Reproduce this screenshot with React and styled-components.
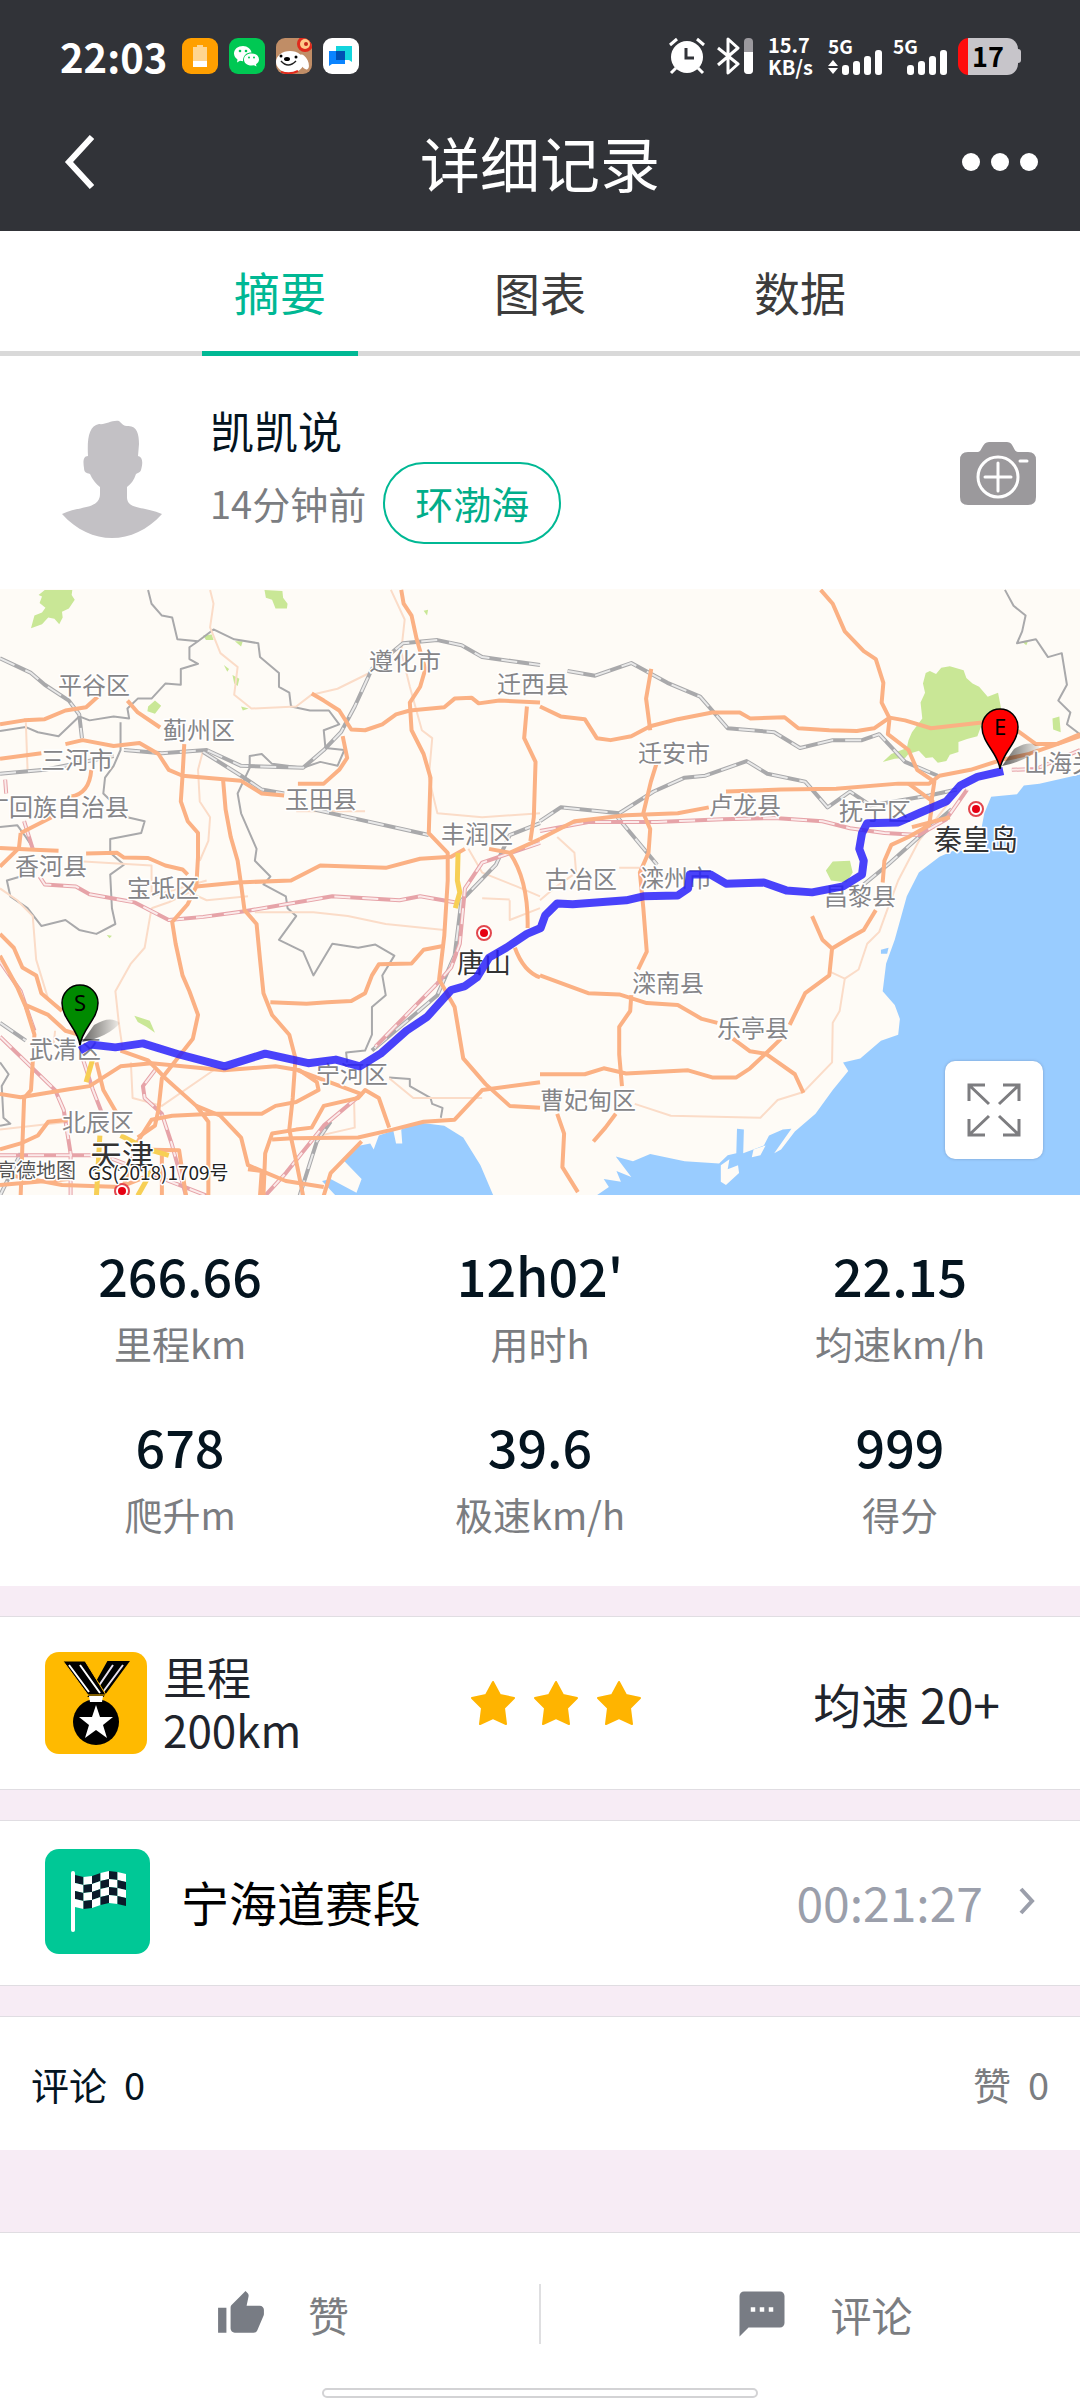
import React from 'react';
import styled, {createGlobalStyle} from 'styled-components';
import {MdSms, MdThumbUp} from 'react-icons/md';

const GlobalStyle = createGlobalStyle`
	* {
		box-sizing: border-box;
	}

	body {
		margin: 0;
		background: #f7ecf5;
		font-family: "Noto Sans CJK SC", "Noto Sans", sans-serif;
		color: #04141f;
	}

	button {
		padding: 0;
		border: 0;
		background: none;
		font: inherit;
		color: inherit;
		cursor: pointer;
	}

	a {
		color: inherit;
		text-decoration: none;
	}

	svg {
		display: block;
		flex: none;
	}
`;

const Page = styled.div`
	display: flex;
	flex-direction: column;
	min-height: 100vh;
`;

const Header = styled.header`
	background: #313338;
	color: #fff;
	padding: 23px 32px 8px 60px;
`;

const StatusBar = styled.div`
	display: flex;
	align-items: center;
	justify-content: space-between;
	height: 66px;
	padding-right: 27px;
`;

const StatusGroup = styled.div`
	display: flex;
	align-items: center;
	gap: ${props => props.$gap}px;
`;

const Clock = styled.time`
	font-size: 40px;
	font-weight: 700;
	line-height: 54px;
	margin-right: 4px;
`;

const AppIcon = styled.span`
	width: 36px;
	height: 36px;
	border-radius: 9px;
	overflow: hidden;
	background: ${props => props.color};
`;

const Speed = styled.div`
	font-size: 20px;
	font-weight: 700;
	line-height: 22px;
	width: 54px;
	padding-left: 4px;
`;

const Signal = styled.div`
	width: 55px;
	font-size: 19px;
	font-weight: 700;
	line-height: 18px;

	svg {
		margin-top: -6px;
	}
`;

const Battery = styled.div`
	display: flex;
	align-items: center;

	&::after {
		content: '';
		width: 3px;
		height: 14px;
		border-radius: 0 3px 3px 0;
		background: #c7c5ca;
	}
`;

const BatteryBody = styled.div`
	width: 60px;
	height: 37px;
	border-radius: 11px;
	background: linear-gradient(to right, #ff0d0d 10px, #c7c5ca 10px);
	color: #000;
	font-size: 27px;
	font-weight: 700;
	line-height: 35px;
	text-align: center;
`;

const TitleBar = styled.div`
	display: grid;
	grid-template-columns: 100px 1fr 100px;
	align-items: center;
	height: 134px;
	padding-top: 12px;
	margin-left: -28px;

	button {
		display: flex;
		height: 80px;
		align-items: center;
	}

	button:first-child {
		padding-left: 32px;
	}

	button:last-child {
		justify-content: flex-end;
		padding-right: 10px;
	}
`;

const Title = styled.h1`
	margin: 0;
	font-size: 60px;
	font-weight: 400;
	line-height: 80px;
	text-align: center;
`;

const Tabs = styled.nav`
	display: flex;
	justify-content: center;
	gap: 104px;
	background: #fff;
	box-shadow: inset 0 -5px #d9d9d9;
`;

const Tab = styled.button`
	&& {
		width: 156px;
		height: 125px;
		border-bottom: 5px solid ${props => (props.$active ? '#00b894' : 'transparent')};
		color: ${props => (props.$active ? '#00b894' : '#3c3c3c')};
		font-size: 46px;
	}
`;

const Profile = styled.section`
	display: flex;
	align-items: center;
	height: 233px;
	padding: 0 44px 0 61px;
	background: #fff;

	> svg {
		margin-top: 14px;
	}
`;

const ProfileText = styled.div`
	flex: 1;
	padding: 0 0 4px 47px;
`;

const Name = styled.div`
	font-size: 44px;
	line-height: 64px;
`;

const Meta = styled.div`
	display: flex;
	align-items: center;
	gap: 17px;
	font-size: 38px;
	line-height: 78px;
	color: #7b7d81;
`;

const RouteTag = styled.a`
	padding: 0 30px;
	border: 2px solid #00b894;
	border-radius: 41px;
	color: #00ad8a;
`;

const MapBox = styled.section`
	position: relative;
	overflow: hidden;

	> svg {
		width: 100%;
		height: auto;
	}
`;

const ExpandButton = styled.button`
	&& {
		position: absolute;
		right: 37px;
		bottom: 36px;
		display: flex;
		align-items: center;
		justify-content: center;
		width: 98px;
		height: 98px;
		border-radius: 10px;
		background: #fff;
		box-shadow: 0 0 3px rgba(80, 90, 120, 0.4);
	}
`;

const Stats = styled.section`
	display: grid;
	grid-template-columns: repeat(3, 1fr);
	row-gap: 35px;
	padding: 44px 0 40px;
	background: #fff;
	text-align: center;
`;

const StatValue = styled.div`
	font-size: 52px;
	font-weight: 500;
	line-height: 72px;
`;

const StatLabel = styled.div`
	font-size: 38px;
	line-height: 64px;
	color: #7b7d81;
`;

const Card = styled.section`
	display: flex;
	align-items: center;
	height: ${props => props.$height}px;
	margin-top: 30px;
	padding: 0 ${props => props.$pad}px;
	border: solid #e0dde2;
	border-width: 1px 0;
	background: #fff;
`;

const Badge = styled.div`
	flex: none;
	width: ${props => props.$size}px;
	height: ${props => props.$size}px;
	border-radius: 14px;
	background: ${props => props.color};
`;

const BadgeName = styled.div`
	flex: 6 0 0;
	padding-left: 16px;
	font-size: 44px;
	line-height: 53px;
	color: #20242c;
`;

const Stars = styled.div`
	display: flex;
	gap: 17px;
`;

const BadgeNote = styled.div`
	flex: 7 0 0;
	padding-right: 35px;
	text-align: right;
	font-size: 48px;
	color: #20242c;
`;

const SegmentLink = styled.a`
	display: flex;
	flex: 1;
	align-items: center;
	padding-bottom: 4px;
	font-size: 48px;
	color: #000;
`;

const SegmentName = styled.span`
	flex: 1;
	padding-left: 31px;
`;

const SegmentTime = styled.time`
	margin-right: 36px;
	color: #9b9fab;
`;

const Counts = styled(Card)`
	justify-content: space-between;
	font-size: 38px;
	border-bottom-width: 0;
`;

const Count = styled.span`
	display: flex;
	gap: 17px;
	color: ${props => props.color};
`;

const Footer = styled.footer`
	margin-top: auto;
	border-top: 1px solid #e0dde2;
	background: #fff;
`;

const Actions = styled.div`
	display: flex;
	align-items: center;
	height: 155px;
	padding-top: 6px;
`;

const Action = styled.button`
	&& {
		display: flex;
		flex: 1;
		align-items: center;
		justify-content: center;
		gap: 42px;
		padding-left: 26px;
		font-size: 41px;
		color: #7b7d81;
	}

	svg {
		color: #787c84;
	}
`;

const Divider = styled.div`
	width: 2px;
	height: 60px;
	background: #dfdfe1;
`;

const HomeBar = styled.div`
	width: 436px;
	max-width: 60%;
	height: 10px;
	margin: 0 auto 2px;
	border: 2px solid #d3d3d5;
	border-radius: 5px;
`;

const MapLabel = styled.text`
	font-size: ${props => props.$size || 24}px;
	fill: ${props => props.$ink || '#858588'};
	stroke: #fff;
	stroke-width: 3px;
	stroke-linejoin: round;
	paint-order: stroke;
	text-anchor: ${props => props.$anchor || 'middle'};
`;

const MapLine = styled.path`
	fill: none;
	stroke: ${props => props.$ink};
	stroke-width: ${props => props.$w}px;
	stroke-dasharray: ${props => props.$dash || 'none'};
	stroke-linejoin: round;
	vector-effect: non-scaling-stroke;
`;

const ORANGE = '#fbb184';
const PALE = '#fbdcc8';
const GREY = '#a9a9ab';
const ROSE = '#e6a3a8';

const WEST = 'translate(0 -9) scale(0.3444 0.3954)';
const EAST = 'translate(540 -9) scale(0.3444 0.3954)';

const westRoads = [
	'M0,365 L70,355 130,352 190,330 250,322 290,290',
	'M370,305 L400,335 465,373',
	'M0,452 L120,438 M190,415 L240,405 330,420 405,412 460,440 490,480 530,495 700,508 760,540 825,545',
	'M535,415 L530,495 525,560 545,610 575,640 575,700 570,775 545,820 500,865 510,920 530,1000 550,1040 575,1100 560,1160 470,1260 460,1340 450,1380 400,1410',
	'M265,480 Q260,540 205,548 M60,640 L150,600 M60,640 L55,678 0,725',
	'M0,678 L100,682 170,685 M250,692 L340,690 360,702 430,703 480,722 530,732 545,745',
	'M570,775 L690,765 845,760 930,722 1120,728 1220,705 1310,700 1350,680',
	'M648,508 L655,580 670,650 690,710 700,770 710,835 745,870 755,960 765,1045 790,1100 840,1150 858,1210 850,1310 840,1390 860,1470 880,1557',
	'M905,287 L940,305 985,330 1020,378 1060,380 1110,365 1150,340 1190,330 1290,322 1320,300 1370,298 1390,312 1450,305 1568,310',
	'M1165,25 L1172,60 1195,90 1210,150 1235,225 1220,270 1190,310 1195,380 1230,440 1250,500 1245,640 1300,690 1300,760 1290,900 1275,1010 1320,1080 1345,1210 1410,1275 1480,1330 1568,1335',
	'M1530,320 L1522,400 1555,460 1550,600 1540,660',
	'M995,395 L1008,450 985,480 940,515 865,515',
	'M785,1068 L890,1072 950,1068 1020,1065 1060,1045 1080,1000 1100,972 1195,970 1230,935 1290,925',
	'M1568,655 L1480,690 1420,680 M1480,690 Q1535,760 1532,880 M1495,930 Q1520,990 1568,1005',
	'M0,895 L40,930 65,980 105,1000 120,1045 180,1090 M0,950 L50,1030 75,1080 100,1150 95,1220 90,1290 70,1310 65,1430 60,1557',
	'M75,1075 L140,1100 190,1140 230,1150',
	'M0,1300 L60,1308 200,1288 260,1280 350,1230 440,1222 650,1240 800,1230 870,1240 920,1270 925,1290 860,1320 800,1330 760,1350 620,1350 500,1355 440,1365 400,1420 350,1557',
	'M280,1220 L300,1290 340,1350 M350,1190 L430,1215 480,1260 570,1330 605,1370 605,1557',
	'M570,1330 L640,1355 700,1410 720,1480 830,1520 940,1535',
	'M720,1490 L760,1495 755,1557 M765,1557 L770,1450 790,1400 860,1390 905,1385 940,1330 1040,1310 1060,1290 1100,1310 1130,1385',
	'M865,1240 L1050,1300 M790,1415 L850,1412 1040,1410 1140,1390 1230,1370 1320,1365 1400,1290 1568,1270',
	'M940,1557 L960,1500 1050,1420 M0,1440 L60,1425 110,1405 140,1370 200,1365 M0,1500 L180,1530 350,1535 450,1500',
	'M470,1455 L470,1557 M0,1530 L200,1515 M400,1440 L520,1442 540,1557',
];

const westPale = [
	'M610,25 L620,60 610,120 640,185 690,220 680,290 730,325 860,320 905,290 980,275 1080,232',
	'M1135,25 L1175,100 1165,180 1190,270 1225,380 1255,400 1245,500 1270,590 1400,600 1568,590',
	'M590,430 L575,480 580,560 610,600 605,660 580,710 M205,710 L440,722 440,800 600,760',
	'M440,830 L420,930 380,970 335,1040 345,1120 355,1180 M440,830 L490,815 550,790 600,810 720,800',
	'M0,780 L50,810 95,850 105,960 140,1060 180,1085',
	'M740,840 L910,840 1010,850 1120,870 1290,885 M860,585 L1060,585 M75,360 L80,480',
	'M1360,680 L1400,740 1500,775 1568,800 M1480,810 L1480,860 1568,830 M1400,805 L1480,808',
	'M160,1140 L155,1180 M380,1220 L385,1310 470,1330 620,1240 M1130,1260 L1200,1310 1400,1310 M0,1390 L200,1370 M1028,1310 L1030,1385 880,1415',
];

const westRail = [
	'M0,198 L90,235 130,265 200,305 230,340 238,400',
	'M360,430 L470,438 600,430 700,470 880,475 940,430 990,385 1030,320 1080,225 1170,160 1270,152 1340,165 1400,195 1568,215',
	'M590,435 L700,495 760,530 825,540 M0,490 L130,480 330,445 M0,1120 L75,1165',
	'M910,580 L1245,645 M1568,615 L1480,645 1440,720 1340,810 1320,950 1270,1050 1080,1190',
	'M870,1557 L920,1420 960,1370 M0,1557 L60,1450',
];

const westBorder = [
	'M430,25 L440,60 470,90 500,95 515,150 575,155 550,170 550,200 575,212 525,225 525,265 480,262 440,300 400,300 370,325 375,350 330,345 260,355 230,345 170,395 110,385 75,372 0,382',
	'M575,155 L620,125 680,150 750,160 755,195 810,235 810,270 840,285 845,320 900,330 955,330 985,365 940,380 945,425 1000,430 980,470 930,460 880,475 790,465 760,440 725,445 725,475 690,540 700,590 725,640 745,680 740,710 785,750 765,770 830,800 835,830 860,850 810,910 880,940 910,1000 965,920 1040,930 1090,922 1145,950 1110,1000 1120,1050 1080,1080 1080,1150 1060,1190 1005,1195 1010,1235',
	'M350,360 L350,430 330,470 305,500 300,540 370,600 420,610 410,640 320,655 320,690 360,720 320,745 325,830 335,870 280,895 230,885 190,860 120,875 80,830 30,800 20,760 60,750',
	'M0,625 L50,620 75,650 90,670 M0,1220 L25,1250 5,1280 10,1360 30,1375 0,1380',
	'M1130,1258 L1190,1262 1190,1280 1250,1310 1255,1325 1285,1335 1280,1360',
];

const westExpress = [
	'M115,750 L130,770 220,775 260,795 390,815 490,860 590,852 710,838 830,820 965,800 1160,810 1220,800 1320,815',
	'M1568,665 L1400,715 1350,780 1335,920 1310,980 1270,1020 1090,1180',
	'M1050,1300 L940,1380 830,1500 770,1557 M0,1155 L160,1290 185,1340 205,1450 205,1557 M0,965 L60,1040 100,1140',
	'M240,1210 L270,1290 310,1380 M450,1240 L415,1280 420,1310 470,1350 500,1430 540,1557 M70,610 L95,680 M15,505 L18,540',
	'M0,1455 L300,1455 520,1530 600,1557',
];

const westYellow = 'M1330,690 L1328,760 1335,790 1322,830 M268,1215 L250,1270 M290,1405 L280,1557 M350,1405 L430,1440 490,1455 M450,1480 L400,1557';

const westParks = [
	'M130,25 L210,25 208,38 217,50 200,72 180,80 182,95 172,112 158,98 140,95 122,112 90,122 100,90 122,82 132,70 115,58 122,42 112,38Z',
	'M768,25 L820,28 822,45 835,60 833,72 800,72 790,50 772,45Z',
	'M590,140 L615,138 620,152 598,152Z M650,215 L665,225 660,232Z M675,240 L695,250 690,268 680,262Z',
	'M430,320 L450,305 468,318 450,338 428,332Z M1230,78 L1243,75 1240,90Z M700,320 L722,325 705,330Z',
	'M390,1102 L435,1115 450,1145 425,1130 400,1118Z M682,155 L705,155 700,168Z M310,898 L325,900 318,906Z',
];

const eastRoads = [
	'M0,320 L60,345 130,352 165,400 205,405 265,395 320,370 400,352 500,335 580,335 610,350 710,347 750,375 840,380 920,382 970,375 1015,348 1060,355 1135,375 1290,360 1350,358 1400,390 1440,415 1500,415 1568,390',
	'M815,25 L850,60 885,130 940,180 975,200 997,260 992,310 1015,350 1010,390 1070,430 1095,480 1145,510 1135,570',
	'M323,225 L308,300 320,380 M338,465 L322,510 300,590 320,630 315,690 290,740 300,830 310,940 285,985',
	'M0,655 L100,610 250,595 400,590 490,575 M540,535 L700,530 860,528 1040,515 1130,515 1160,495 1250,480 1340,455 1420,440 1568,395',
	'M1070,515 L1140,560 1130,620 1070,650 1020,670 1000,710 995,765 M1080,625 L1190,600',
	'M0,1000 L140,1045 230,1048 310,1070 400,1075 470,1110 515,1120 M265,1050 L262,1090 230,1130 230,1200 238,1280',
	'M0,1250 L130,1250 185,1235 250,1248 430,1240 500,1258 570,1258 610,1235 655,1198 700,1160',
	'M790,850 L820,910 848,932 900,905 940,885 975,835 M848,932 L840,1000 770,1045 725,1125',
	'M560,1160 L610,1192 655,1198 740,1250 765,1297 M50,1350 L70,1400 65,1485 110,1548 M220,1350 L190,1385 155,1420',
];

const eastPale = [
	'M840,990 L885,1008 870,1090 850,1120 848,1220 765,1295 690,1315 640,1360 380,1355 275,1325',
	'M885,1008 L925,985 950,920 985,890 1010,830 1040,760 1100,660 1190,560',
	'M0,810 L40,780 105,740 100,690 50,650 M230,728 L290,728',
];

const eastRail = [
	'M80,230 L160,242 265,210 370,260 465,295 545,375 680,385 755,425 850,405 935,405 985,390 1060,460 1155,495',
	'M0,610 L60,575 230,590 330,535 420,500 480,495 600,458 660,490 770,510 835,575 900,535 960,570 1130,545 1210,530',
	'M225,600 L340,720 M940,770 L1010,720 1100,650 1195,580',
];

const eastBorder = [
	'M1350,25 L1375,65 1410,90 1400,130 1385,160 1440,150 1475,195 1515,185 1530,265 1505,305 1540,335 1530,365 1568,390',
];

const eastExpress = [
	'M0,635 L140,612 340,612 530,605 680,602 820,610 900,628 1000,640 1100,645 1180,605 1240,530',
	'M1370,480 L1440,478 1568,430',
];

const eastParks = [
	'M1120,235 L1132,230 1150,238 1165,222 1190,218 1230,228 1238,248 1256,262 1275,270 1300,295 1330,285 1340,330 1330,360 1285,360 1270,395 1240,402 1215,410 1215,435 1190,442 1180,458 1155,462 1140,448 1120,450 1100,432 1070,440 1060,450 1030,452 995,460 1020,440 1065,425 1070,405 1080,385 1110,350 1105,310 1118,285 1112,262Z',
	'M830,735 L850,712 900,710 908,740 890,765 845,760Z M1488,350 L1508,345 1512,385 1490,378Z M1398,155 L1418,153 1412,165Z',
];

const labels = [
	['平谷区', 94, 96], ['蓟州区', 199, 141], ['三河市', 77, 171], ['广回族自治县', 57, 218],
	['香河县', 51, 277], ['宝坻区', 163, 299], ['玉田县', 321, 210], ['丰润区', 477, 245],
	['遵化市', 405, 72], ['迁西县', 533, 95], ['武清区', 65, 460], ['宁河区', 352, 485],
	['北辰区', 98, 533], ['迁安市', 674, 164], ['卢龙县', 745, 216], ['抚宁区', 875, 222],
	['山海关', 1060, 174], ['古冶区', 581, 290], ['滦州市', 676, 289], ['昌黎县', 860, 307],
	['滦南县', 668, 394], ['乐亭县', 753, 439], ['曹妃甸区', 588, 511],
];

const cities = [
	['唐山', 484, 373, 27, 484, 344],
	['秦皇岛', 976, 250, 28, 976, 220],
	['天津', 122, 568, 32, 122, 602],
];

const route = 'M232,1190 L262,1175 335,1182 415,1172 520,1200 652,1230 770,1198 895,1222 975,1213 1045,1230 1105,1198 1180,1140 1240,1105 1310,1037 1350,1027 1385,1005 1420,955 1470,930 1530,895 1570,880 1583,848 1618,818 1663,820 1818,810 1868,800 1968,798 1998,780 2003,745 2063,745 2108,768 2218,765 2283,785 2358,790 2448,775 2503,745 2508,710 2495,680 2503,640 2518,615 2608,613 2668,590 2748,560 2788,520 2838,498 2913,483';

const lines = (paths, ink, w, dash) => paths.map((d) => (
	<MapLine key={d} d={d} $ink={ink} $w={w} $dash={dash}/>
));

const Rail = ({paths, ink, light}) => (
	<>
		{lines(paths, ink, 4)}
		{lines(paths, light, 2, '16 12')}
	</>
);

const Pin = ({x, y, color, letter}) => (
	<g transform={`translate(${x} ${y})`}>
		<path d="M2,-3 L14,-20 Q30,-30 40,-22 Q28,-8 2,-3Z" fill="url(#pinShadow)"/>
		<path
			d="M0,0 C-2,-16 -18,-26 -18,-42 A18,18 0 0 1 18,-42 C18,-26 2,-16 0,0Z"
			fill={color}
			stroke="#000"
			strokeWidth="1.5"
		/>
		<text y="-34" textAnchor="middle" fontFamily="Noto Sans" fontSize="22" fill="#000">{letter}</text>
	</g>
);

const RouteMap = () => (
	<svg viewBox="0 0 1080 606" role="img" aria-label="骑行路线">
		<defs>
			<linearGradient id="pinShadow" x1="0" y1="0" x2="1" y2="0">
				<stop offset="0" stopColor="#000" stopOpacity="0.6"/>
				<stop offset="1" stopColor="#000" stopOpacity="0.05"/>
			</linearGradient>
		</defs>
		<rect width="1080" height="606" fill="#fefbf6"/>
		<g transform={WEST}>
			<path
				fill="#99ccff"
				d="M1435,1562 L1395,1480 1345,1410 1290,1380 1215,1372 1165,1390 1168,1425 1150,1425 1142,1392 1100,1405 1085,1440 1075,1425 1035,1432 1000,1470 1050,1515 1035,1550 960,1515 935,1520 980,1562Z"
			/>
			{westParks.map((d) => <path key={d} d={d} fill="#c9e796"/>)}
			{lines(westBorder, GREY, 2)}
			{lines(westPale, PALE, 2)}
			<Rail paths={westRail} ink={GREY} light="#e9e9e9"/>
			<Rail paths={westExpress} ink={ROSE} light="#fbeaea"/>
			{lines(westRoads, ORANGE, 4)}
			<MapLine d={westYellow} $ink="#f7cf55" $w={5}/>
		</g>
		<g transform={EAST}>
			<path
				fill="#99ccff"
				d="M155,1562 L200,1535 185,1515 235,1522 222,1495 265,1510 220,1458 270,1470 320,1452 420,1470 520,1476 545,1455 570,1450 572,1388 592,1390 590,1450 650,1430 665,1405 705,1390 730,1388 680,1450 700,1440 740,1395 800,1350 850,1290 895,1242 880,1220 930,1210 990,1165 1040,1150 1045,1110 1030,1075 995,1040 1005,970 1030,910 1065,800 1100,740 1160,700 1200,685 1270,685 1290,590 1310,548 1385,542 1405,520 1450,515 1568,492 1572,492 1572,1562Z"
			/>
			<path fill="#fefbf6" d="M525,1480 L550,1465 545,1490 575,1480 578,1500 540,1530 525,1522Z M620,1440 L655,1430 640,1455 615,1460Z"/>
			<path fill="#99ccff" d="M990,935 L1012,930 1008,945 990,945Z"/>
			{eastParks.map((d) => <path key={d} d={d} fill="#c9e796"/>)}
			{lines(eastBorder, GREY, 2)}
			{lines(eastPale, PALE, 2)}
			<Rail paths={eastRail} ink={GREY} light="#e9e9e9"/>
			<Rail paths={eastExpress} ink={ROSE} light="#fbeaea"/>
			{lines(eastRoads, ORANGE, 4)}
		</g>
		{labels.map(([name, x, y]) => <MapLabel key={name} x={x} y={y + 9}>{name}</MapLabel>)}
		{cities.map(([name, x, y, size, cx, cy]) => (
			<g key={name}>
				<circle cx={cx} cy={cy} r="7" fill="#fff" stroke="#e2474d" strokeWidth="2"/>
				<circle cx={cx} cy={cy} r="4" fill="#e60012"/>
				<MapLabel x={x} y={y + 11} $size={size} $ink="#333">{name}</MapLabel>
			</g>
		))}
		<MapLabel x="-4" y="589" $size={20} $ink="#555" $anchor="start">高德地图</MapLabel>
		<MapLabel x="88" y="591" $size={19} $ink="#222" $anchor="start">GS(2018)1709号</MapLabel>
		<g transform={WEST}>
			<MapLine d={route} $ink="rgba(38, 30, 250, 0.84)" $w={8}/>
		</g>
		<Pin x={80} y={456} color="#008a00" letter="S"/>
		<Pin x={1000} y={180} color="#ff0000" letter="E"/>
	</svg>
);

const Bars = ({arrows}) => (
	<svg width="55" height="26" viewBox="0 0 55 26" fill="#fff">
		{arrows && <path d="M0,17 L5,11 10,17Z M0,19 L5,25 10,19Z"/>}
		<rect x="14" y="16" width="7" height="10" rx="3"/>
		<rect x="25" y="12" width="7" height="14" rx="3"/>
		<rect x="36" y="7" width="7" height="19" rx="3"/>
		<rect x="47" y="1" width="7" height="25" rx="3"/>
	</svg>
);

const Star = () => (
	<svg width="46" height="46" viewBox="0 0 46 46" fill="#ffb400" stroke="#ffb400" strokeWidth="2" strokeLinejoin="round">
		<path d="M23,2 L30,15 44,18 34,28 36,44 23,38 10,44 12,28 2,18 16,15Z"/>
	</svg>
);

const AlarmIcon = () => (
	<svg width="38" height="38" viewBox="0 0 38 38" fill="none" stroke="#fff" strokeWidth="3">
		<circle cx="19" cy="20" r="16" fill="#fff" stroke="none"/>
		<path d="M2,8 L9,2 M36,8 L29,2 M8,31 L3,36 M30,31 L35,36"/>
		<path d="M18,11 V21 H26" stroke="#313338"/>
	</svg>
);

const BluetoothBattery = () => (
	<svg width="38" height="38" viewBox="0 0 38 38">
		<g fill="none" stroke="#fff" strokeWidth="3" strokeLinejoin="round">
			<path d="M2,11 L22,27 12,36 V2 L22,11 2,28"/>
		</g>
		<rect x="28" y="1" width="9" height="36" rx="4" fill="#9b999e"/>
		<path d="M28,15 H37 V33 A4,4 0 0 1 33,37 H32 A4,4 0 0 1 28,33Z" fill="#fff"/>
	</svg>
);

const WechatIcon = () => (
	<svg width="36" height="36" viewBox="0 0 36 36" fill="#fff">
		<path d="M14,8 C9,8 5,11 5,15.5 C5,18 6.5,20 8.5,21.5 L8,24.5 11,22.8 L14,23.2 C14,17 18,14.5 22.5,14.5 C22,11 18.5,8 14,8Z"/>
		<path d="M22.5,15.5 C18,15.5 15,18 15,21.5 C15,25 18,27.5 22.5,27.5 L25,27.2 27.5,28.5 27,26.3 C28.8,25 30,23.5 30,21.5 C30,18 27,15.5 22.5,15.5Z"/>
		<g fill="#00c853">
			<circle cx="11" cy="13" r="1.3"/>
			<circle cx="17" cy="13" r="1.3"/>
			<circle cx="20" cy="19.5" r="1"/>
			<circle cx="25" cy="19.5" r="1"/>
		</g>
	</svg>
);

const BatteryAppIcon = () => (
	<svg width="36" height="36" viewBox="0 0 36 36">
		<path d="M11,9 H15 V7 H21 V9 H25 V23 H11Z" fill="#ffd591"/>
		<path d="M11,23 H25 V29 H11Z" fill="#fff"/>
	</svg>
);

const DogIcon = () => (
	<svg width="36" height="36" viewBox="0 0 36 36">
		<ellipse cx="14" cy="24" rx="14" ry="11" fill="#fff"/>
		<ellipse cx="28" cy="24" rx="4" ry="8" fill="#fff" transform="rotate(-25 28 24)"/>
		<circle cx="29" cy="6" r="8" fill="#e02a1c"/>
		<circle cx="29" cy="6" r="5" fill="#ffc98a"/>
		<circle cx="30" cy="6" r="2" fill="#c8271b"/>
		<circle cx="5" cy="18" r="1.5"/>
		<circle cx="20" cy="19" r="1.5"/>
		<ellipse cx="11" cy="21" rx="3" ry="2"/>
		<path d="M5,23 Q12,31 20,23" fill="none" stroke="#222" strokeWidth="1.5"/>
		<path d="M5,34 Q14,37 22,33" fill="none" stroke="#e02a1c" strokeWidth="2"/>
	</svg>
);

const ChatAppIcon = () => (
	<svg width="36" height="36" viewBox="0 0 36 36">
		<path d="M13,8 H29 V24 L26,22 H13Z" fill="#12d4dd"/>
		<path d="M6,13 H22 V26 H9 L6,28Z" fill="#0a84ff"/>
		<path d="M13,13 H22 V22 H13Z" fill="#0050b3"/>
	</svg>
);

const Avatar = () => (
	<svg width="102" height="120" viewBox="0 0 102 120" fill="#c3c1c5">
		<path d="M27,36 C26,18 28,6 38,4 C45,5 50,0 58,1 C61,4 63,6 66,6 C76,5 78,14 78,24 L77,36 C82,37 82,43 80,50 C79,53 76,53 75,54 C73,60 70,64 66,67 V78 C67,90 83,86 101,94 C72,126 30,126 1,94 C16,86 39,90 39,74 V67 C35,64 31,59 29,54 C25,53 23,52 23,48 C22,42 22,36 27,36Z"/>
	</svg>
);

const CameraIcon = () => (
	<svg width="76" height="64" viewBox="0 0 76 64">
		<path d="M8,11 H18 C22,11 22,1 29,1 H47 C54,1 53,11 58,11 H68 Q76,11 76,19 V56 Q76,64 68,64 H8 Q0,64 0,56 V19 Q0,11 8,11Z" fill="#9b999c"/>
		<g fill="none" stroke="#fff" strokeWidth="3">
			<circle cx="38" cy="36" r="20"/>
			<path d="M25,36 H51 M38,22 V50 M60,20 H67" strokeLinecap="round"/>
		</g>
	</svg>
);

const MedalIcon = () => (
	<svg width="102" height="102" viewBox="0 0 102 102">
		<path d="M63,10 H83 L58,44 H44Z" stroke="#000" strokeWidth="2"/>
		<path d="M78,13 L58,40 M68,13 L53,35" stroke="#e8e0ee" strokeWidth="2"/>
		<path d="M18,9 H40 L61,43 H43Z" stroke="#ffba00" strokeWidth="1"/>
		<path d="M24,13 L44,40 M35,13 L55,41" stroke="#fff" strokeWidth="2"/>
		<circle cx="51" cy="70" r="23"/>
		<path d="M44,44 H58 L57,50 H45Z" fill="#fff"/>
		<path d="M51,53 L55,65 68,65 58,73 62,86 51,78 40,86 44,73 34,65 47,65Z" fill="#fff"/>
	</svg>
);

const FlagIcon = () => {
	const wave = [4, 6, 5, 2, 0, 1, 3];
	const cells = [];
	for (let col = 0; col < 6; col++) {
		for (let row = 0; row < 4; row++) {
			const x = 30 + col * 8.5;
			const top = 22 + row * 8;
			cells.push(
				<path
					key={`${col}-${row}`}
					d={`M${x},${top + wave[col]} L${x + 8.5},${top + wave[col + 1]} V${top + wave[col + 1] + 8} L${x},${top + wave[col] + 8}Z`}
					fill={(col + row) % 2 ? '#fff' : '#0b1b2b'}
				/>
			);
		}
	}
	return (
		<svg width="105" height="105" viewBox="0 0 105 105">
			<rect x="26" y="22" width="4" height="61" rx="2" fill="#fff"/>
			{cells}
		</svg>
	);
};

const stats = [
	['266.66', '里程km'],
	['12h02\'', '用时h'],
	['22.15', '均速km/h'],
	['678', '爬升m'],
	['39.6', '极速km/h'],
	['999', '得分'],
];

const App = () => (
	<Page>
		<GlobalStyle/>
		<Header>
			<StatusBar>
				<StatusGroup $gap={11}>
					<Clock>22:03</Clock>
					<AppIcon color="#ff9f00"><BatteryAppIcon/></AppIcon>
					<AppIcon color="#00c853"><WechatIcon/></AppIcon>
					<AppIcon color="#c08d66"><DogIcon/></AppIcon>
					<AppIcon color="#fff"><ChatAppIcon/></AppIcon>
				</StatusGroup>
				<StatusGroup $gap={10}>
					<AlarmIcon/>
					<BluetoothBattery/>
					<Speed>15.7<br/>KB/s</Speed>
					<Signal>5G<Bars arrows/></Signal>
					<Signal>5G<Bars/></Signal>
					<Battery><BatteryBody>17</BatteryBody></Battery>
				</StatusGroup>
			</StatusBar>
			<TitleBar>
				<button aria-label="返回">
					<svg width="30" height="54" viewBox="0 0 30 54" fill="none" stroke="#fff" strokeWidth="6">
						<path d="M28,2 L5,27 28,52"/>
					</svg>
				</button>
				<Title>详细记录</Title>
				<button aria-label="更多">
					<svg width="76" height="18" viewBox="0 0 76 18" fill="#fff">
						<circle cx="9" cy="9" r="9"/>
						<circle cx="38" cy="9" r="9"/>
						<circle cx="67" cy="9" r="9"/>
					</svg>
				</button>
			</TitleBar>
		</Header>
		<Tabs>
			<Tab $active>摘要</Tab>
			<Tab>图表</Tab>
			<Tab>数据</Tab>
		</Tabs>
		<Profile>
			<Avatar/>
			<ProfileText>
				<Name>凯凯说</Name>
				<Meta>
					<span>14分钟前</span>
					<RouteTag href="#">环渤海</RouteTag>
				</Meta>
			</ProfileText>
			<button aria-label="添加照片"><CameraIcon/></button>
		</Profile>
		<MapBox>
			<RouteMap/>
			<ExpandButton aria-label="全屏">
				<svg width="54" height="54" viewBox="0 0 54 54" fill="none" stroke="#7d7d80" strokeWidth="3">
					<path d="M2,18 V2 H18 M2,2 L22,21 M36,2 H52 V18 M52,2 L32,21"/>
					<path d="M2,36 V52 H18 M2,52 L22,33 M36,52 H52 V36 M52,52 L32,33"/>
				</svg>
			</ExpandButton>
		</MapBox>
		<Stats>
			{stats.map(([value, label]) => (
				<div key={label}>
					<StatValue>{value}</StatValue>
					<StatLabel>{label}</StatLabel>
				</div>
			))}
		</Stats>
		<Card $height={174} $pad={45}>
			<Badge color="#ffba00" $size={102}><MedalIcon/></Badge>
			<BadgeName>里程<br/>200km</BadgeName>
			<Stars>
				<Star/>
				<Star/>
				<Star/>
			</Stars>
			<BadgeNote>均速 20+</BadgeNote>
		</Card>
		<Card $height={166} $pad={45}>
			<SegmentLink href="#">
				<Badge color="#00c896" $size={105}><FlagIcon/></Badge>
				<SegmentName>宁海道赛段</SegmentName>
				<SegmentTime>00:21:27</SegmentTime>
				<svg width="16" height="28" viewBox="0 0 16 28" fill="none" stroke="#9b9fab" strokeWidth="4">
					<path d="M2,2 L13,14 2,26"/>
				</svg>
			</SegmentLink>
		</Card>
		<Counts $height={134} $pad={31}>
			<Count><span>评论</span><span>0</span></Count>
			<Count color="#7b7d81"><span>赞</span><span>0</span></Count>
		</Counts>
		<Footer>
			<Actions>
				<Action><MdThumbUp size={50}/>赞</Action>
				<Divider/>
				<Action><MdSms size={54}/>评论</Action>
			</Actions>
			<HomeBar/>
		</Footer>
	</Page>
);

export default App;
